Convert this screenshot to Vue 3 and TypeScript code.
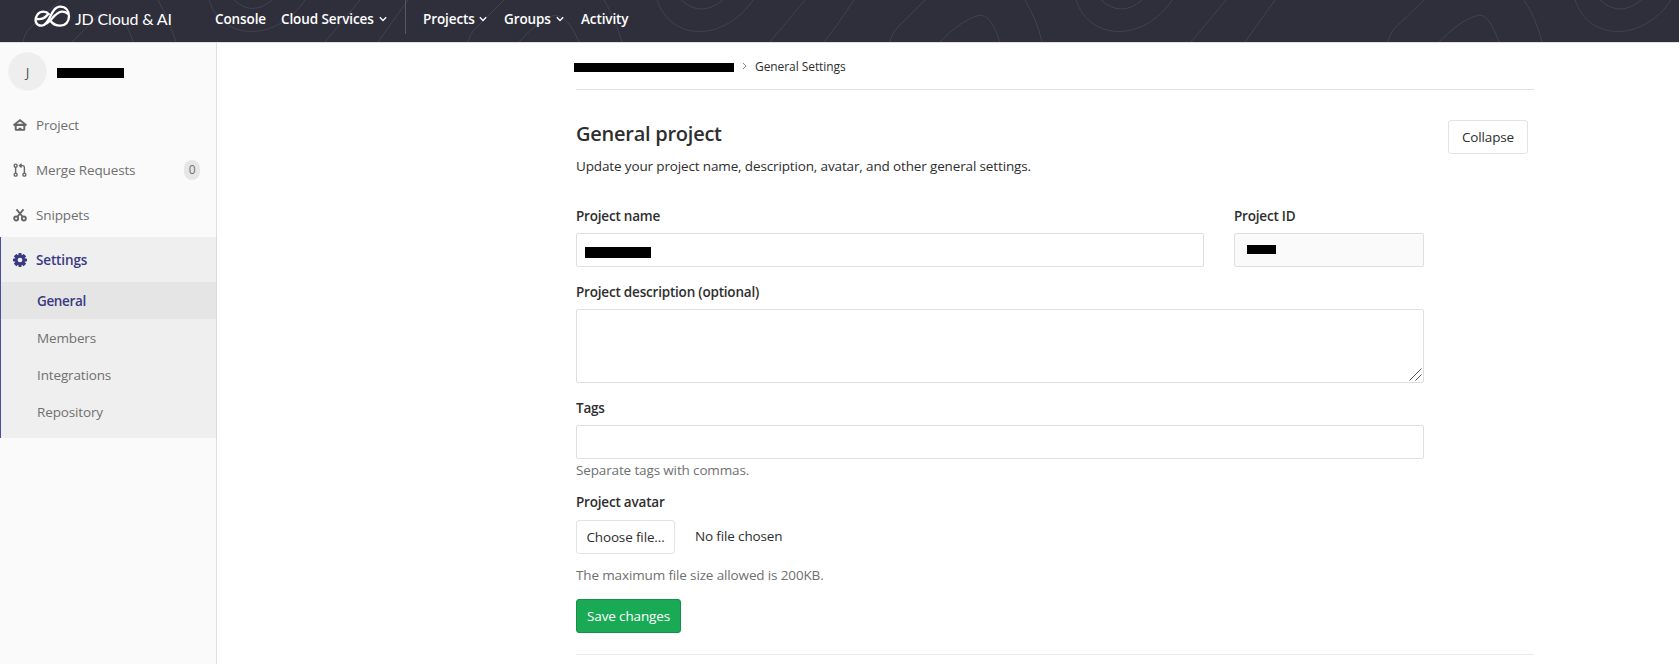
<script setup lang="ts">
interface NavItem { label: string; icon: string; count?: number }
const navItems: NavItem[] = [
  { label: 'Project', icon: 'home' },
  { label: 'Merge Requests', icon: 'merge', count: 0 },
  { label: 'Snippets', icon: 'scissors' },
]
const subItems: string[] = ['General', 'Members', 'Integrations', 'Repository']
</script>

<template>
  <div class="page">
    <header class="topbar">
      <svg class="waves" width="1679" height="42" viewBox="0 0 1679 42" fill="none" stroke="#41424e" stroke-width="1">
        <path d="M23 42C25 31 29 30 35 23L61 0M72 42L101 13M118 15Q128 24 133 42M158 0Q170 20 176 42" />
        <path d="M209 0C222 42 277 42 305 0M234 0Q252 17 272 0M325 42L360 0M378 42L408 0" />
        <path d="M468 42Q470 34 474 30L504 0M519 42Q539 20 552 16Q566 12 579 42M604 0Q615 18 622 42" />
        <path d="M657 0C671 42 724 42 753 0M681 0Q701 18 723 0M770 42L805 0" />
        <path d="M824 42Q840 22 854 0M890 42Q891 35 896 29L925 0M940 42Q962 19 980 15Q991 14 1000 42M1025 0Q1037 20 1042 42" />
        <path d="M1076 0C1090 42 1144 42 1172 0M1101 0Q1121 18 1142 0M1191 42L1226 0M1245 42L1275 0" />
        <path d="M1388 42Q1390 34 1394 29L1424 0M1439 42Q1461 19 1479 15Q1489 14 1499 42M1524 0Q1536 18 1542 42M1575 0C1589 42 1643 42 1671 0M1600 0Q1620 18 1641 0" />
      </svg>
      <a class="brand">
        <svg width="37" height="24" viewBox="0 0 111 72" fill="none" stroke="#fff" stroke-width="7" stroke-linecap="round">
          <path d="M44 27C37 18 20 17 11 28C-1 44 5 62 23 62C48 62 50 5 78 5C96 5 105 18 105 34C105 51 94 62 79 62C66 62 56 57 50 48" />
          <path d="M8 42C24 44 34 38 40 30M38 55C54 48 62 22 83 20Q94 19 101 26" />
        </svg>
        <span>JD Cloud &amp; AI</span>
      </a>
      <nav class="menu main"><a class="t-console">Console</a><a class="t-cloud">Cloud Services</a><svg class="chev" viewBox="0 0 8 6"><path d="M.8 1.200L4 4.500L7.200 1.200" /></svg></nav>
      <nav class="menu second"><a class="t-projects">Projects</a><svg class="chev" viewBox="0 0 8 6"><path d="M.8 1.200L4 4.500L7.200 1.200" /></svg><a class="t-groups">Groups</a><svg class="chev" viewBox="0 0 8 6"><path d="M.8 1.200L4 4.500L7.200 1.200" /></svg><a class="t-activity">Activity</a></nav>
    </header>
    <div class="body">
      <aside class="sidebar">
        <div class="context"><span class="avatar">J</span><span class="mask owner"></span></div>
        <a v-for="item in navItems" :key="item.label" class="nav-item">
          <svg v-if="item.icon === 'home'" class="icon" viewBox="0 0 16 16"><path fill-rule="evenodd" d="M8 1L15.600 7.200Q16.300 9 14.500 9.100H14V13Q14 14.700 12.500 14.700H3.500Q2 14.700 2 13V9.100H1.500Q-.3 9 .4 7.200ZM8 3.900L4.400 6.700H11.600ZM4.200 9.100V12.500H6.300V11H9.700V12.500H11.800V9.100Z" /></svg>
          <svg v-else-if="item.icon === 'merge'" class="icon line" viewBox="0 0 16 16"><circle cx="3" cy="3" r="1.700" /><circle cx="3" cy="13.300" r="1.700" /><circle cx="13" cy="13.300" r="1.700" /><path d="M3 4.600V11.700M13 11.700V5Q13 3 11 3H8M9.800 .8L7.500 3L9.800 5.200" /></svg>
          <svg v-else class="icon line thick" viewBox="0 0 16 16"><circle cx="3.600" cy="12" r="2.300" /><circle cx="12.400" cy="12" r="2.300" /><path d="M4 1.500L11 10M12 1.500L5 10" /></svg>
          <span class="nav-label">{{ item.label }}</span>
          <span v-if="item.count !== undefined" class="count">{{ item.count }}</span>
        </a>
        <div class="active-group">
          <a class="nav-item active">
            <svg class="icon" viewBox="0 0 16 16"><path fill-rule="evenodd" d="M6.500 0H9.500L10 2.700L12.200 1L15 3.800L13.300 6L16 6.500V9.500L13.300 10L15 12.200L12.200 15L10 13.300L9.500 16H6.500L6 13.300L3.800 15L1 12.200L2.700 10L0 9.500V6.500L2.700 6L1 3.800L3.800 1L6 2.700ZM8 5.300A2.700 2.700 0 1 0 8 10.700A2.700 2.700 0 1 0 8 5.300Z" /></svg>
            <span class="nav-label">Settings</span>
          </a>
          <a v-for="(label, i) in subItems" :key="label" class="sub-item" :class="{ current: i === 0 }">{{ label }}</a>
        </div>
      </aside>
      <main class="content">
        <div class="crumbs"><span class="mask path"></span><svg class="crumb-arrow" viewBox="0 0 5 8"><path d="M1 1L4 4L1 7" /></svg><span class="crumb-label">General Settings</span></div>
        <section class="settings">
          <div class="heading">
            <div><h4>General project</h4><p class="t-update">Update your project name, description, avatar, and other general settings.</p></div>
            <button class="btn collapse">Collapse</button>
          </div>
          <form class="form" @submit.prevent>
            <div class="row">
              <div class="name-col"><label>Project name</label><div class="field"><span class="mask name"></span></div></div>
              <div class="id-col"><label>Project ID</label><div class="field readonly"><span class="mask id"></span></div></div>
            </div>
            <label>Project description (optional)</label>
            <div class="field area"><svg width="13" height="13" viewBox="0 0 13 13" stroke="#555" fill="none"><path d="M.5 12.500L12.500 .5M6.500 12.500L12.500 6.500" /></svg></div>
            <label>Tags</label>
            <div class="field"></div>
            <p class="hint tags-hint">Separate tags with commas.</p>
            <label class="avatar-label">Project avatar</label>
            <div class="upload"><button class="btn choose">Choose file...</button><span>No file chosen</span></div>
            <p class="hint size-hint">The maximum file size allowed is 200KB.</p>
            <button class="btn save">Save changes</button>
          </form>
        </section>
      </main>
    </div>
  </div>
</template>

<style>
body { margin: 0; overflow: hidden; }
</style>

<style scoped>
* { box-sizing: border-box; }
.page { height: 664px; display: flex; flex-direction: column; background: #fff; color: #2e2e2e; font: 13.5px/20px "Open Sans", "Noto Sans", sans-serif; overflow: hidden; letter-spacing: -.14px; }
.topbar { height: 43px; flex: none; background: #2e2f3b; border-bottom: 1px solid #dfdfdf; display: flex; position: relative; color: #fff; letter-spacing: -.1px; }
.waves { position: absolute; left: 0; top: 0; }
.brand { display: flex; position: relative; width: 215px; padding: 5px 0 0 34px; white-space: nowrap; font: 16px/28px Lato, sans-serif; letter-spacing: -.15px; }
.brand svg { flex: none; margin-right: 4px; }
.menu { position: relative; display: flex; align-items: center; height: 34px; padding-top: 3px; font-weight: 600; white-space: nowrap; }
.main { width: 191px; border-right: 1px solid #565762; }
.second { padding-left: 17px; }
.t-console { width: 66px; }
.t-cloud { width: 98px; }
.t-projects { width: 56px; }
.t-groups { width: 52px; margin-left: 17px; }
.t-activity { margin-left: 17px; }
.chev { width: 8px; height: 6px; fill: none; stroke: #fff; stroke-width: 1.300; overflow: visible; }
.body { flex: 1; min-height: 0; display: flex; }
.sidebar { width: 217px; flex: none; background: #fafafa; border-right: 1px solid #dfdfdf; color: #707070; }
.context { height: 59px; padding: 9px 0 0 8px; display: flex; align-items: flex-start; }
.avatar { width: 39px; height: 39px; border-radius: 50%; border: 1px solid #f2f2f2; background: #eee; text-align: center; line-height: 38px; color: #555; }
.mask { display: block; background: #000; }
.owner { width: 67px; height: 10px; margin: 16px 0 0 10px; }
.nav-item { height: 45px; display: flex; align-items: center; padding: 0 16px 0 13px; }
.icon { width: 14px; height: 14px; margin-right: 9px; flex: none; fill: #666; overflow: visible; }
.icon.line { fill: none; stroke: #666; stroke-width: 1.600; }
.icon.thick { stroke-width: 2.100; }
.nav-label { flex: 1; }
.count { width: 16px; height: 20px; border-radius: 8px; background: #e6e6e6; text-align: center; font-size: 12px; }
.active-group { background: #efefef; border-left: 1px solid #4b4ba3; height: 201px; margin-right: -1px; border-right: 1px solid #dadada; }
.active { padding-left: 12px; color: #393982; font-weight: 600; }
.active .icon { fill: #393982; }
.sub-item { height: 37px; display: flex; align-items: center; padding-left: 36px; }
.sub-item.current { color: #393982; background: #e5e5e5; font-weight: 600; letter-spacing: -.35px; }
.content { width: 958px; margin-left: 359px; }
.crumbs { height: 47px; border-bottom: 1px solid #e1e1e1; display: flex; align-items: center; font-size: 12px; }
.crumb-label { padding-top: 2px; letter-spacing: -.07px; }
.path { width: 160px; height: 9px; margin: 2px 0 0 -2px; }
.crumb-arrow { width: 5px; height: 8px; fill: none; stroke: #888; margin: 0 8px 0 8px; }
.settings { height: 565px; border-bottom: 1px solid #eaeaea; }
.heading { height: 112px; display: flex; justify-content: space-between; padding: 30px 6px 0 0; }
h4 { margin: 0; font-size: 20px; line-height: 28px; font-weight: 600; letter-spacing: -.25px; }
p { margin: 0; }
.t-update { margin-top: 8px; }
.btn { font: inherit; letter-spacing: inherit; color: inherit; height: 34px; border: 1px solid #e3e3e3; border-radius: 3px; background: #fff; padding: 0; text-align: center; white-space: nowrap; }
.collapse { width: 80px; }
.form { width: 848px; }
.row { display: grid; grid-template-columns: 628px 190px; gap: 30px; }
label { display: block; height: 20px; margin: 15px 0 7px; line-height: 20px; font-weight: 600; letter-spacing: -.2px; }
.row label { margin-top: 4px; }
.field { height: 34px; border: 1px solid #dfdfdf; border-radius: 2px; background: #fff; }
.readonly { background: #fafafa; }
.name { width: 66px; height: 11px; margin: 13px 0 0 8px; }
.id { width: 29px; height: 9px; margin: 11px 0 0 12px; }
.area { height: 74px; display: flex; align-items: flex-end; justify-content: flex-end; padding: 1px; }
.hint { color: #707070; }
.tags-hint { margin-top: 1px; }
.avatar-label { margin: 12px 0 8px; }
.upload { display: flex; height: 34px; }
.choose { width: 99px; margin-right: 20px; }
.upload span { padding-top: 6px; }
.size-hint { margin-top: 11px; }
.save { display: block; width: 105px; margin-top: 14px; background: #1aaa55; border-color: #168f48; color: #fff; }
</style>
